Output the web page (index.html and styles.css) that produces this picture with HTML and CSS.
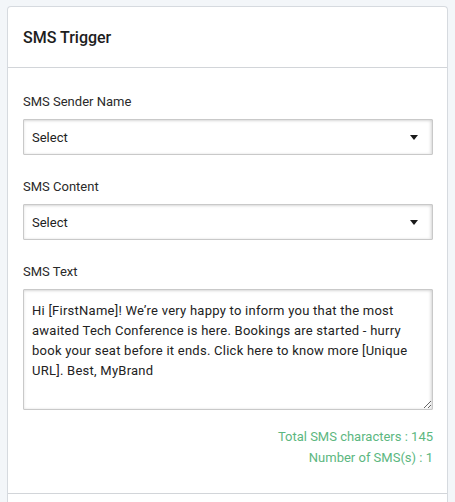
FILE: index.html
```html
<!DOCTYPE html>
<html lang="en">
<head>
<meta charset="utf-8">
<title>SMS Trigger</title>
<link rel="stylesheet" href="styles.css">
</head>
<body>
<div class="card">
  <div class="card-header">
    <h2 class="card-title">SMS Trigger</h2>
  </div>
  <div class="card-body">
    <div class="field">
      <label class="field-label">SMS Sender Name</label>
      <div class="select">
        <span class="select-value">Select</span>
        <span class="select-caret"></span>
      </div>
    </div>
    <div class="field">
      <label class="field-label">SMS Content</label>
      <div class="select">
        <span class="select-value">Select</span>
        <span class="select-caret"></span>
      </div>
    </div>
    <div class="field">
      <label class="field-label">SMS Text</label>
      <textarea class="sms-text">Hi [FirstName]! We’re very happy to inform you that the most awaited Tech Conference is here. Bookings are started - hurry book your seat before it ends. Click here to know more [Unique URL]. Best, MyBrand</textarea>
    </div>
    <div class="stats">
      <div class="stat">Total SMS characters : 145</div>
      <div class="stat">Number of SMS(s) : 1</div>
    </div>
  </div>
  <div class="card-footer"></div>
</div>
</body>
</html>
```

FILE: styles.css
```css
* { box-sizing: border-box; }
html, body { margin: 0; }
body {
  background: #f3f6f9;
  padding: 6px 7px 0 7px;
  font-family: Roboto, "Liberation Sans", Arial, sans-serif;
  color: #212121;
}
.card {
  background: #fff;
  border: 1px solid #d6dadf;
  border-bottom: none;
  border-radius: 4px 4px 0 0;
}
.card-header {
  height: 61px;
  border-bottom: 1px solid #d2d5d9;
  display: flex;
  align-items: center;
  padding: 0 15px;
}
.card-title {
  margin: 0;
  font-size: 16px;
  font-weight: 500;
  color: #1d1d1d;
}
.card-body {
  padding: 25px 14px 25px 15px;
  border-bottom: 1px solid #d2d5d9;
}
.field { margin-bottom: 23px; }
.field-label {
  display: block;
  font-size: 13px;
  line-height: 18px;
  color: #2a2a2a;
  margin-bottom: 8px;
}
.select {
  height: 36px;
  border: 1px solid #c9c9c9;
  border-radius: 1px;
  box-shadow: inset 0 1px 3px rgba(0,0,0,0.12), inset -2px 0 3px rgba(0,0,0,0.08);
  display: flex;
  align-items: center;
  justify-content: space-between;
  padding: 0 14px 0 8px;
}
.select-value {
  font-size: 13px;
  color: #222;
}
.select-caret {
  width: 0;
  height: 0;
  border-left: 4px solid transparent;
  border-right: 4px solid transparent;
  border-top: 5px solid #1a1a1a;
}
.sms-text {
  display: block;
  width: 100%;
  height: 121px;
  margin: 0;
  border: 1px solid #c9c9c9;
  border-radius: 1px;
  box-shadow: inset 0 1px 3px rgba(0,0,0,0.12), inset -2px 0 3px rgba(0,0,0,0.08);
  padding: 11px 8px;
  font-family: Roboto, "Liberation Sans", Arial, sans-serif;
  font-size: 13px;
  line-height: 20px;
  letter-spacing: 0.25px;
  color: #222;
  resize: vertical;
  outline: none;
}
.stats {
  text-align: right;
  margin-top: -7px;
}
.stat {
  font-size: 13px;
  line-height: 21px;
  color: #5cb77f;
}
.card-footer { height: 20px; }
```
